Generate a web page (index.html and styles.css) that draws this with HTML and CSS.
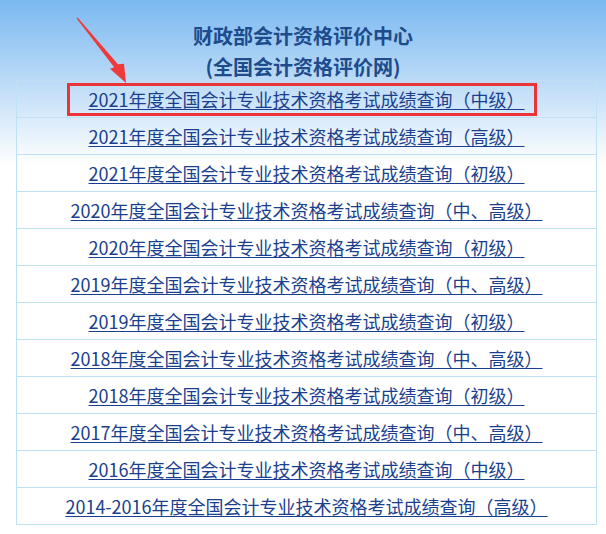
FILE: index.html
```html
<!DOCTYPE html>
<html lang="zh-CN">
<head>
<meta charset="utf-8">
<title>财政部会计资格评价中心</title>
<link rel="stylesheet" href="styles.css">
</head>
<body>
<div class="page">
  <header class="head">
    <div>财政部会计资格评价中心</div>
    <div>(全国会计资格评价网)</div>
  </header>
  <div class="list">
    <div class="row"><a href="#">2021年度全国会计专业技术资格考试成绩查询（中级）</a></div>
    <div class="row"><a href="#">2021年度全国会计专业技术资格考试成绩查询（高级）</a></div>
    <div class="row"><a href="#">2021年度全国会计专业技术资格考试成绩查询（初级）</a></div>
    <div class="row"><a href="#">2020年度全国会计专业技术资格考试成绩查询（中、高级）</a></div>
    <div class="row"><a href="#">2020年度全国会计专业技术资格考试成绩查询（初级）</a></div>
    <div class="row"><a href="#">2019年度全国会计专业技术资格考试成绩查询（中、高级）</a></div>
    <div class="row"><a href="#">2019年度全国会计专业技术资格考试成绩查询（初级）</a></div>
    <div class="row"><a href="#">2018年度全国会计专业技术资格考试成绩查询（中、高级）</a></div>
    <div class="row"><a href="#">2018年度全国会计专业技术资格考试成绩查询（初级）</a></div>
    <div class="row"><a href="#">2017年度全国会计专业技术资格考试成绩查询（中、高级）</a></div>
    <div class="row"><a href="#">2016年度全国会计专业技术资格考试成绩查询（中级）</a></div>
    <div class="row"><a href="#">2014-2016年度全国会计专业技术资格考试成绩查询（高级）</a></div>
  </div>
  <div class="highlight"></div>
  <svg class="arrow" width="606" height="100" viewBox="0 0 606 100">
    <polygon points="77.6,17.6 118,64.3 124,63.8 126,83 110,68.8 114.2,67.2 76.6,18.4" fill="#ee3a3a"/>
  </svg>
</div>
</body>
</html>
```
FILE: styles.css
```css
html, body {
  margin: 0;
  padding: 0;
}
body {
  background: linear-gradient(to bottom, #7ab8f0 0, #ffffff 165px) no-repeat;
  background-color: #ffffff;
  min-height: 534px;
  font-family: "Noto Sans CJK SC", "Microsoft YaHei", sans-serif;
}
.page {
  position: relative;
  width: 606px;
  height: 534px;
}
.head {
  box-sizing: border-box;
  height: 80px;
  padding-top: 20px;
  text-align: center;
  font-size: 20px;
  font-weight: 700;
  line-height: 31px;
  color: #1d4b8c;
}
.list {
  margin-left: 16px;
  width: 579px;
  border: 1px solid #bfe1f4;
  border-top-color: #c3def3;
}
.row {
  height: 36px;
  line-height: 36px;
  text-align: center;
  font-size: 18px;
  border-top: 1px solid #bfe1f4;
}
.row:first-child {
  border-top: none;
  height: 36px;
}
.row a {
  color: #1a3f8e;
  text-decoration: underline;
  text-decoration-thickness: 1px;
  text-underline-offset: 2px;
}
.highlight {
  position: absolute;
  left: 67px;
  top: 83px;
  width: 464px;
  height: 27px;
  border: 3px solid #ec3336;
}
.arrow {
  position: absolute;
  left: 0;
  top: 0;
}
```
